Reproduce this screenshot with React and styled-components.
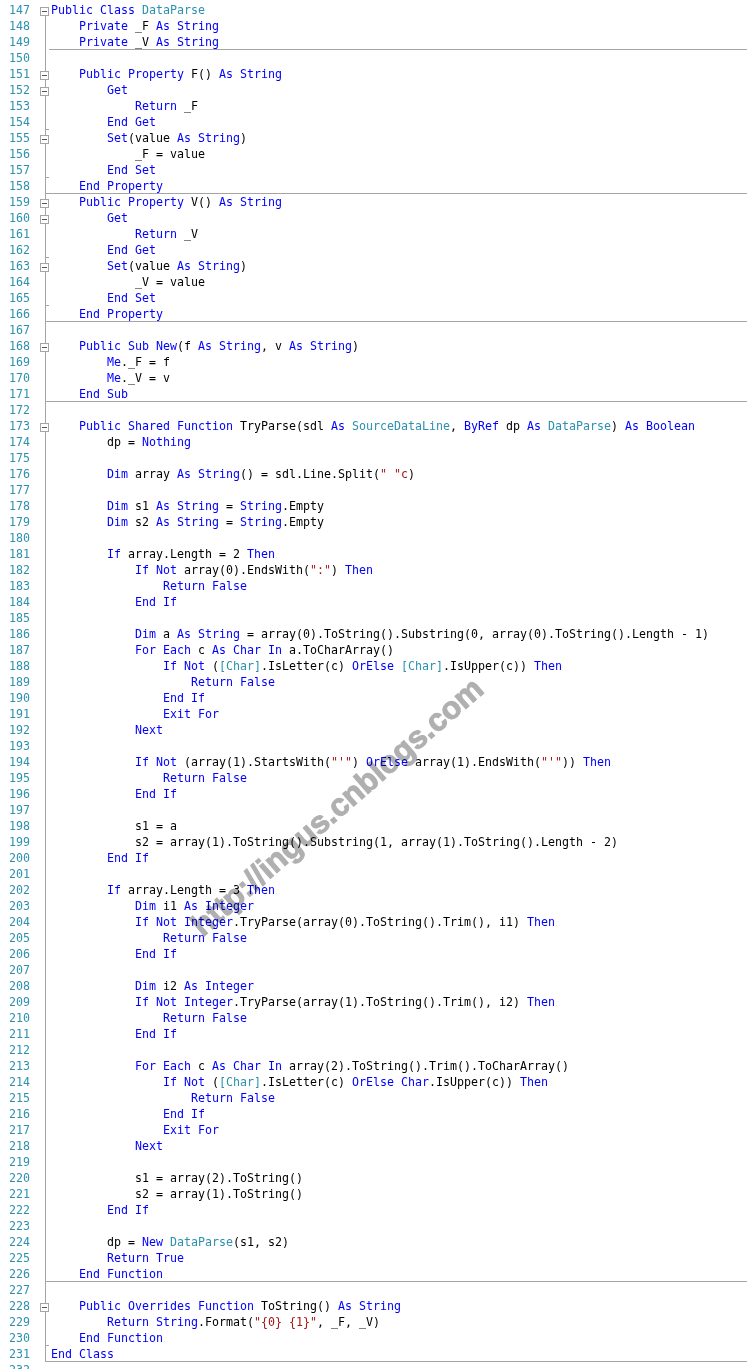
import React from "react";
import styled, { createGlobalStyle } from "styled-components";

const Global = createGlobalStyle`
  html, body { margin: 0; padding: 0; background: #fff; }
`;

const Page = styled.div`
  position: relative;
  width: 747px;
  height: 1369px;
  overflow: hidden;
  padding-top: 2px;
  box-sizing: border-box;
  background: #fff;
  font-family: "DejaVu Sans Mono", "Liberation Mono", monospace;
  font-size: 11.63px;
`;

const Row = styled.div`
  display: flex;
  height: 16px;
`;

const LineNo = styled.div`
  width: 30px;
  flex: none;
  text-align: right;
  color: #2b91af;
  line-height: 17px;
  white-space: pre;
`;

const Gutter = styled.svg`
  display: block;
  flex: none;
  width: 21px;
  height: 16px;
`;

const Code = styled.div`
  flex: 1;
  box-sizing: border-box;
  height: 16px;
  line-height: 17px;
  color: #000;
  white-space: pre;
  border-bottom: 1px solid ${(p) => (p.$sep ? "#a5a5a5" : "transparent")};
`;

const Token = styled.span`
  color: ${(p) => ({ k: "#0000ff", t: "#2b91af", s: "#a31515" })[p.$kind]};
`;

const Watermark = styled.div`
  position: absolute;
  left: 196px;
  top: 914px;
  transform-origin: 0 50%;
  transform: rotate(-41deg);
  font-family: "Liberation Sans", Arial, sans-serif;
  font-weight: 700;
  font-size: 31.5px;
  line-height: 1;
  white-space: nowrap;
  color: #b0b0b0;
  -webkit-text-stroke: 1px #b0b0b0;
  mix-blend-mode: multiply;
  pointer-events: none;
`;

const source = `Public Class DataParse
    Private _F As String
    Private _V As String

    Public Property F() As String
        Get
            Return _F
        End Get
        Set(value As String)
            _F = value
        End Set
    End Property
    Public Property V() As String
        Get
            Return _V
        End Get
        Set(value As String)
            _V = value
        End Set
    End Property

    Public Sub New(f As String, v As String)
        Me._F = f
        Me._V = v
    End Sub

    Public Shared Function TryParse(sdl As SourceDataLine, ByRef dp As DataParse) As Boolean
        dp = Nothing

        Dim array As String() = sdl.Line.Split(" "c)

        Dim s1 As String = String.Empty
        Dim s2 As String = String.Empty

        If array.Length = 2 Then
            If Not array(0).EndsWith(":") Then
                Return False
            End If

            Dim a As String = array(0).ToString().Substring(0, array(0).ToString().Length - 1)
            For Each c As Char In a.ToCharArray()
                If Not ([Char].IsLetter(c) OrElse [Char].IsUpper(c)) Then
                    Return False
                End If
                Exit For
            Next

            If Not (array(1).StartsWith("'") OrElse array(1).EndsWith("'")) Then
                Return False
            End If

            s1 = a
            s2 = array(1).ToString().Substring(1, array(1).ToString().Length - 2)
        End If

        If array.Length = 3 Then
            Dim i1 As Integer
            If Not Integer.TryParse(array(0).ToString().Trim(), i1) Then
                Return False
            End If

            Dim i2 As Integer
            If Not Integer.TryParse(array(1).ToString().Trim(), i2) Then
                Return False
            End If

            For Each c As Char In array(2).ToString().Trim().ToCharArray()
                If Not ([Char].IsLetter(c) OrElse Char.IsUpper(c)) Then
                    Return False
                End If
                Exit For
            Next

            s1 = array(2).ToString()
            s2 = array(1).ToString()
        End If

        dp = New DataParse(s1, s2)
        Return True
    End Function

    Public Overrides Function ToString() As String
        Return String.Format("{0} {1}", _F, _V)
    End Function
End Class
`.split("\n");

const FIRST = 147;
const BOXES = new Set([147, 151, 152, 155, 159, 160, 163, 168, 173, 228]);
const TICKS = new Set([154, 157, 162, 165, 230]);
const FOLD_END = new Set([158, 166, 171, 226, 231]);
const FIELD_END = new Set([149]);

const PATTERN =
  /("[^"]*"c?)|(\[Char\]|\bDataParse\b|\bSourceDataLine\b)|\b(Public|Private|Class|As|String|Property|Get|Return|End|Set|Sub|New|Me|Shared|Function|ByRef|Boolean|Nothing|Dim|If|Then|Not|False|True|For|Each|Char|In|OrElse|Exit|Next|Integer|Overrides)\b/g;

function tokenize(text) {
  const out = [];
  let last = 0;
  for (const m of text.matchAll(PATTERN)) {
    if (m.index > last) out.push(text.slice(last, m.index));
    const kind = m[1] ? "s" : m[2] ? "t" : "k";
    out.push(
      <Token key={m.index} $kind={kind}>
        {m[0]}
      </Token>
    );
    last = m.index + m[0].length;
  }
  if (last < text.length) out.push(text.slice(last));
  return out;
}

const STROKE = "#a5a5a5";

function Fold({ n }) {
  if (n > 231) return <Gutter />;
  const box = BOXES.has(n);
  return (
    <Gutter viewBox="0 0 21 16" shapeRendering="crispEdges">
      {n === 147 ? (
        <rect x="15" y="14" width="1" height="2" fill={STROKE} />
      ) : (
        <rect x="15" y="0" width="1" height="16" fill={STROKE} />
      )}
      {box && (
        <>
          <rect x="10.5" y="5.5" width="8" height="8" fill="#fff" stroke={STROKE} />
          <rect x="12" y="9" width="5" height="1" fill="#555" />
        </>
      )}
      {TICKS.has(n) && <rect x="15" y="15" width="4" height="1" fill={STROKE} />}
      {FIELD_END.has(n) && <rect x="19" y="15" width="2" height="1" fill={STROKE} />}
      {FOLD_END.has(n) && <rect x="15" y="15" width="6" height="1" fill={STROKE} />}
    </Gutter>
  );
}

export default function App() {
  return (
    <Page>
      <Global />
      {source.map((text, i) => {
        const n = FIRST + i;
        return (
          <Row key={n}>
            <LineNo>{n}</LineNo>
            <Fold n={n} />
            <Code $sep={FOLD_END.has(n) || FIELD_END.has(n)}>{tokenize(text)}</Code>
          </Row>
        );
      })}
      <Watermark>http://ingus.cnblogs.com</Watermark>
    </Page>
  );
}
